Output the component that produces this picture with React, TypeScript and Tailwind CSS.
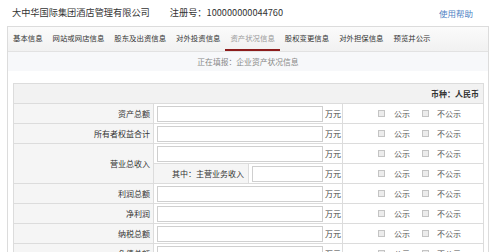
import React from 'react'

const font = { fontFamily: '"Noto Sans CJK SC", "Liberation Sans", sans-serif' }

const tabs = ['基本信息', '网站或网店信息', '股东及出资信息', '对外投资信息', '资产状况信息', '股权变更信息', '对外担保信息', '预览并公示']

function Box() {
    return <span className="inline-block w-[7px] h-[7px] border border-[#c4c4c4] bg-[#ececec]" />
}

function Checks() {
    return (
        <td className="border border-[#dcdcdc] bg-white">
            <div className="flex items-center pl-[35px] text-[8px] text-[#555]">
                <Box />
                <span className="ml-[9px]">公示</span>
                <span className="ml-[12px] flex items-center"><Box /></span>
                <span className="ml-[8px]">不公示</span>
            </div>
        </td>
    )
}

function Field({ w = 'w-[166px]' }: { w?: string }) {
    return (
        <div className="flex items-center">
            <div className={`${w} h-[16px] border border-[#cfcfcf] bg-white`} />
            <span className="ml-[2px] text-[8px] text-[#444]">万元</span>
        </div>
    )
}

const rows = ['资产总额', '所有者权益合计', 'REV', '利润总额', '净利润', '纳税总额', '负债总额']

export default function App() {
    return (
        <div className="w-[499px] h-[252px] overflow-hidden bg-white text-[#333]" style={font}>
            {/* Header */}
            <div className="h-[26px] flex items-center pl-[12px] pr-[26px] text-[9.2px]">
                <span>大中华国际集团酒店管理有限公司</span>
                <span className="ml-[20px]">注册号：100000000044760</span>
                <span className="ml-auto text-[8.5px] text-[#4f82c4]">使用帮助</span>
            </div>

            <div className="ml-[7px] w-[482px] border-l border-r border-t border-[#dcdcdc]">
                {/* Tabs */}
                <div className="h-[25px] flex items-stretch border-b border-[#e2e2e2] bg-gradient-to-b from-[#fbfbfb] to-[#f1f1f1] text-[7.4px]">
                    {tabs.map((t, i) => (
                        <div
                            key={t}
                            className={`px-[5px] flex items-center border-b-2 ${i === 4 ? 'border-[#8c1c1c] text-[#999]' : 'border-transparent text-[#333]'}`}
                        >
                            {t}
                        </div>
                    ))}
                </div>

                {/* Status */}
                <div className="h-[19px] flex items-center justify-center bg-[#f7f8fa] text-[7.8px] text-[#888]">
                    正在填报：企业资产状况信息
                </div>

                <div className="px-[5px] pt-[12px]">
                    <table className="w-[470px] border-collapse table-fixed">
                        <colgroup>
                            <col className="w-[140px]" />
                            <col className="w-[189px]" />
                            <col className="w-[141px]" />
                        </colgroup>
                        <tbody>
                            <tr className="h-[20px]">
                                <td colSpan={3} className="border border-[#dcdcdc] bg-[#f2f2f2] text-right pr-[4px] text-[8px] font-bold text-[#333]">
                                    币种：人民币
                                </td>
                            </tr>
                            {rows.map((r) =>
                                r === 'REV' ? (
                                    <React.Fragment key={r}>
                                        <tr className="h-[20px]">
                                            <td rowSpan={2} className="border border-[#dcdcdc] bg-[#f5f5f5] text-right pr-[3px] text-[8px]">
                                                营业总收入
                                            </td>
                                            <td className="border border-[#dcdcdc] pl-[3px]">
                                                <Field />
                                            </td>
                                            <Checks />
                                        </tr>
                                        <tr className="h-[20px]">
                                            <td className="border border-[#dcdcdc] p-0">
                                                <div className="flex items-stretch h-[19px]">
                                                    <div className="w-[95px] bg-[#f5f5f5] border-r border-[#dcdcdc] flex items-center justify-end pr-[4px] text-[8px]">
                                                        其中：主营业务收入
                                                    </div>
                                                    <div className="pl-[3px] flex items-center">
                                                        <Field w="w-[71px]" />
                                                    </div>
                                                </div>
                                            </td>
                                            <Checks />
                                        </tr>
                                    </React.Fragment>
                                ) : (
                                    <tr key={r} className="h-[20px]">
                                        <td className="border border-[#dcdcdc] bg-[#f5f5f5] text-right pr-[3px] text-[8px]">{r}</td>
                                        <td className="border border-[#dcdcdc] pl-[3px]">
                                            <Field />
                                        </td>
                                        <Checks />
                                    </tr>
                                )
                            )}
                        </tbody>
                    </table>
                </div>
            </div>
        </div>
    )
}
